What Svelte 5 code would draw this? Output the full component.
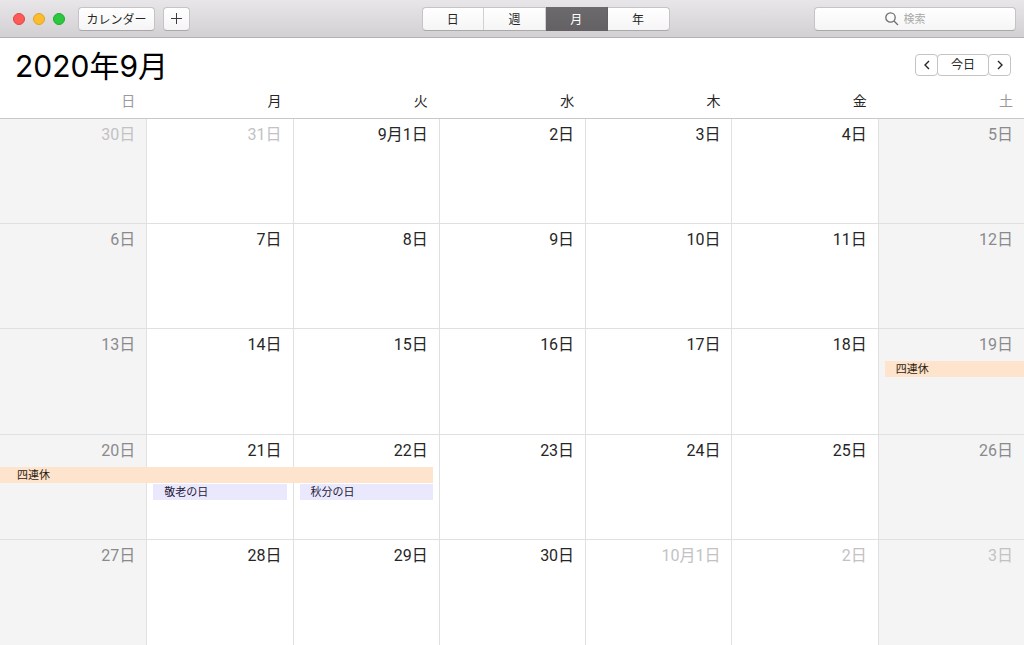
<script>

    const views = ['日', '週', '月', '年']
    const weekdays = ['日', '月', '火', '水', '木', '金', '土']

    const weeks = [
        ['30日', '31日', '9月1日', '2日', '3日', '4日', '5日'],
        ['6日', '7日', '8日', '9日', '10日', '11日', '12日'],
        ['13日', '14日', '15日', '16日', '17日', '18日', '19日'],
        ['20日', '21日', '22日', '23日', '24日', '25日', '26日'],
        ['27日', '28日', '29日', '30日', '10月1日', '2日', '3日']
    ]

    // keyed by week-day, each event drawn one day at a time
    const events = {
        '2-6': [{ title: '四連休', type: 'personal', start: true }],
        '3-0': [{ title: '四連休', type: 'personal' }],
        '3-1': [
            { title: '', type: 'personal', joined: true },
            { title: '敬老の日', type: 'holiday', start: true, end: true }
        ],
        '3-2': [
            { title: '', type: 'personal', joined: true, end: true },
            { title: '秋分の日', type: 'holiday', start: true, end: true }
        ]
    }

    let current_view = '月'
    let search = ''

    const is_other_month = (week, day) => {
        return (week === 0 && day < 2) || (week === 4 && day > 3)
    }

    const is_weekend = (day) => day === 0 || day === 6

</script>

<div class="window">
    <header class="toolbar">
        <div class="left">
            <div class="lights">
                <button class="light close" type="button" aria-label="閉じる"></button>
                <button class="light minimize" type="button" aria-label="しまう"></button>
                <button class="light zoom" type="button" aria-label="拡大"></button>
            </div>
            <button class="tool calendars" type="button">カレンダー</button>
            <button class="tool add" type="button" aria-label="追加">
                <svg width="12" height="12" viewBox="0 0 12 12">
                    <path d="M5.5 0V11M0 5.5H11" />
                </svg>
            </button>
        </div>
        <div class="views">
            {#each views as view}
                <button type="button" class:active={ view === current_view } on:click={ () => current_view = view }>{ view }</button>
            {/each}
        </div>
        <div class="right">
            <label class="search">
                <svg width="14" height="14" viewBox="0 0 14 14">
                    <circle cx="5.5" cy="5.5" r="4.7" />
                    <path d="M9 9L13 13" />
                </svg>
                <input bind:value={ search } type="text" placeholder="検索" aria-label="検索">
            </label>
        </div>
    </header>

    <div class="heading">
        <h1>2020年9月</h1>
        <div class="pager">
            <button class="arrow" type="button" aria-label="前の月">
                <svg width="8" height="10" viewBox="0 0 8 10"><path d="M6 1L2 5L6 9" /></svg>
            </button>
            <button class="today" type="button">今日</button>
            <button class="arrow" type="button" aria-label="次の月">
                <svg width="8" height="10" viewBox="0 0 8 10"><path d="M2 1L6 5L2 9" /></svg>
            </button>
        </div>
    </div>

    <div class="month">
        <table>
            <thead>
                <tr>
                    {#each weekdays as weekday, day}
                        <th scope="col" class:weekend={ is_weekend(day) }>{ weekday }</th>
                    {/each}
                </tr>
            </thead>
            <tbody>
                {#each weeks as week, w}
                    <tr>
                        {#each week as date, day}
                            <td class:weekend={ is_weekend(day) } class:other={ is_other_month(w, day) }>
                                <div class="date">{ date }</div>
                                {#each events[`${w}-${day}`] || [] as event}
                                    <div
                                        class="event { event.type }"
                                        class:start={ event.start }
                                        class:end={ event.end }
                                        class:joined={ event.joined }
                                    >{ event.title }</div>
                                {/each}
                            </td>
                        {/each}
                    </tr>
                {/each}
            </tbody>
        </table>
    </div>
</div>

<style>
    :global(body) {
        background-color: #FFFFFF;
    }

    .window {
        min-height: 100vh;
        display: grid;
        grid-template-rows: auto auto 1fr;
        color: #262626;
        font-family: Roboto, "Noto Sans CJK JP", sans-serif;
    }

    button, input {
        font-family: inherit;
        color: inherit;
        padding: 0;
        margin: 0;
        border: none;
        box-sizing: border-box;
    }

    svg {
        display: block;
        fill: none;
        stroke: #3C3C3C;
    }

    .toolbar {
        display: grid;
        grid-template-columns: 13fr auto 11fr;
        align-items: center;
        box-sizing: border-box;
        height: 38px;
        padding: 0 8px 0 12px;
        background: linear-gradient(#E9E6E9, #D3D0D3);
        border-bottom: 1px solid #B4B1B4;
    }

    .left {
        display: flex;
        align-items: center;
        gap: 8px;
    }

    .lights {
        display: flex;
        gap: 8px;
        padding: 0 5px 0 1px;
    }

    .light {
        width: 12px;
        height: 12px;
        border-radius: 50%;
    }

    .close {
        background-color: #FC5B57;
        border: 1px solid #E2463F;
    }

    .minimize {
        background-color: #FDBB2E;
        border: 1px solid #E1A325;
    }

    .zoom {
        background-color: #2AC73F;
        border: 1px solid #1FAC2E;
    }

    .tool, .views, .search {
        height: 24px;
        border: 1px solid #C6C3C6;
        border-bottom-color: #ABA8AB;
        border-radius: 4px;
        background: linear-gradient(#FFFFFF, #F5F5F5);
        box-sizing: border-box;
    }

    .tool {
        font-size: 12px;
    }

    .calendars {
        width: 77px;
    }

    .add {
        width: 27px;
        display: flex;
        align-items: center;
        justify-content: center;
    }

    .views {
        display: flex;
        width: 248px;
    }

    .views button {
        flex: 1;
        font-size: 12px;
        background: none;
        border-right: 1px solid #D2D0D2;
    }

    .views button:last-child {
        border-right: none;
    }

    .views button.active {
        margin: -1px 0;
        color: #FFFFFF;
        background: linear-gradient(#6C6A6C, #636163);
        border-right-color: #636163;
    }

    .right {
        display: flex;
        justify-content: flex-end;
    }

    .search {
        display: flex;
        align-items: center;
        justify-content: center;
        gap: 5px;
        width: 202px;
    }

    .search svg {
        stroke: #6E6E6E;
        stroke-width: 1.3;
    }

    .search input {
        width: 42px;
        height: 22px;
        padding-top: 2px;
        font-size: 11px;
        background: none;
        outline: none;
    }

    .search input::placeholder {
        color: #A9A9A9;
    }

    .heading {
        display: flex;
        align-items: center;
        justify-content: space-between;
        height: 53px;
        padding: 0 13px 0 15px;
    }

    h1 {
        margin: 0;
        padding-top: 2px;
        font-family: Inter, "Noto Sans CJK JP", sans-serif;
        font-size: 30px;
        line-height: 40px;
        font-weight: 400;
        color: #000000;
    }

    .pager {
        display: flex;
    }

    .pager button {
        height: 22px;
        border: 1px solid #C4C4C4;
        border-radius: 4px;
        background-color: #FFFFFF;
        font-size: 12px;
        line-height: 18px;
    }

    .pager .arrow {
        width: 23px;
        display: flex;
        align-items: center;
        justify-content: center;
    }

    .pager .arrow svg {
        stroke: #262626;
        stroke-width: 1.4;
    }

    .pager .today {
        width: 52px;
        margin: 0 -1px;
    }

    table {
        width: 100%;
        height: 100%;
        table-layout: fixed;
        border-collapse: separate;
        border-spacing: 0;
    }

    th {
        height: 28px;
        box-sizing: border-box;
        padding: 0 11px 7px 0;
        text-align: right;
        font-size: 14px;
        line-height: 20px;
        font-weight: 400;
        border-bottom: 1px solid #C8C8C8;
    }

    th.weekend {
        color: #9A9A9E;
    }

    td {
        height: 20%;
        box-sizing: border-box;
        padding: 4px 0 0;
        vertical-align: top;
        border-left: 1px solid #E0E0E0;
        border-bottom: 1px solid #E0E0E0;
    }

    td:first-child {
        border-left: none;
    }

    tr:last-child td {
        border-bottom: none;
    }

    td.weekend {
        background-color: #F4F4F4;
    }

    .date {
        padding-right: 11px;
        margin-bottom: 4px;
        text-align: right;
        font-size: 16px;
        line-height: 24px;
    }

    .weekend .date {
        color: #8A8A8E;
    }

    .other .date {
        color: #C2C2C4;
    }

    .event {
        height: 16px;
        margin-bottom: 1px;
        padding-left: 17px;
        font-size: 11px;
        line-height: 18px;
        white-space: nowrap;
    }

    .personal {
        background-color: #FEE4CD;
        color: #2E1C10;
    }

    .holiday {
        background-color: #EAE8FC;
        color: #1E1A38;
    }

    .event.start {
        margin-left: 6px;
        padding-left: 11px;
    }

    .event.end {
        margin-right: 6px;
    }

    /* runs over the line between two days */
    .event.joined {
        margin-left: -1px;
    }
</style>
